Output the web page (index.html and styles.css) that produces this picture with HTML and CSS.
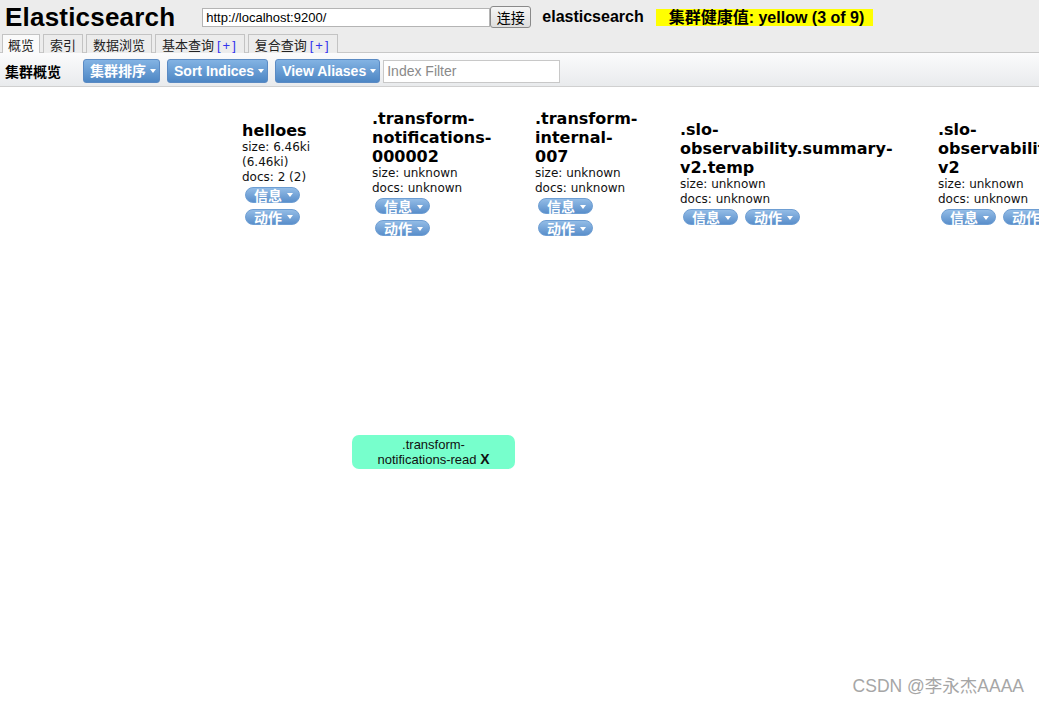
FILE: index.html
```html
<!DOCTYPE html>
<html lang="zh">
<head>
<meta charset="utf-8">
<title>Elasticsearch Head</title>
<link rel="stylesheet" href="styles.css">
</head>
<body>
<div class="header">
  <div class="top-row">
    <div class="logo">Elasticsearch</div>
    <input class="url" type="text" value="http://localhost:9200/">
    <button class="connect">连接</button>
    <span class="cluster-name">elasticsearch</span>
    <span class="health">集群健康值: yellow (3 of 9)</span>
  </div>
  <div class="tabs">
    <div class="tab active">概览</div>
    <div class="tab">索引</div>
    <div class="tab">数据浏览</div>
    <div class="tab">基本查询 <span class="plus">[+]</span></div>
    <div class="tab">复合查询 <span class="plus">[+]</span></div>
  </div>
</div>
<div class="toolbar">
  <span class="toolbar-title">集群概览</span>
  <button class="tbtn">集群排序<i class="caret"></i></button>
  <button class="tbtn">Sort Indices<i class="caret"></i></button>
  <button class="tbtn last">View Aliases<i class="caret"></i></button>
  <input class="filter" type="text" placeholder="Index Filter">
</div>
<div class="overview">
  <div class="indices">
    <div class="col col-1">
      <div class="card">
        <div class="iname">helloes</div>
        <div class="meta">size: 6.46ki (6.46ki)</div>
        <div class="meta">docs: 2 (2)</div>
        <div class="actions stack">
          <span class="pill">信息<i class="caret sm"></i></span>
          <span class="pill">动作<i class="caret sm"></i></span>
        </div>
      </div>
    </div>
    <div class="col col-2">
      <div class="card">
        <div class="iname">.transform-<wbr>notifications-<wbr>000002</div>
        <div class="meta">size: unknown</div>
        <div class="meta">docs: unknown</div>
        <div class="actions stack">
          <span class="pill">信息<i class="caret sm"></i></span>
          <span class="pill">动作<i class="caret sm"></i></span>
        </div>
      </div>
    </div>
    <div class="col col-3">
      <div class="card">
        <div class="iname">.transform-<wbr>internal-<wbr>007</div>
        <div class="meta">size: unknown</div>
        <div class="meta">docs: unknown</div>
        <div class="actions stack">
          <span class="pill">信息<i class="caret sm"></i></span>
          <span class="pill">动作<i class="caret sm"></i></span>
        </div>
      </div>
    </div>
    <div class="col col-4">
      <div class="card">
        <div class="iname">.slo-<wbr>observability.summary-<wbr>v2.temp</div>
        <div class="meta">size: unknown</div>
        <div class="meta">docs: unknown</div>
        <div class="actions inline">
          <span class="pill">信息<i class="caret sm"></i></span>
          <span class="pill">动作<i class="caret sm"></i></span>
        </div>
      </div>
    </div>
    <div class="col col-5">
      <div class="card">
        <div class="iname">.slo-<wbr>observability.summary-<wbr>v2</div>
        <div class="meta">size: unknown</div>
        <div class="meta">docs: unknown</div>
        <div class="actions inline">
          <span class="pill">信息<i class="caret sm"></i></span>
          <span class="pill">动作<i class="caret sm"></i></span>
        </div>
      </div>
    </div>
  </div>
  <div class="alias">.transform-<br>notifications-read <b>X</b></div>
</div>
<div class="watermark">CSDN @李永杰AAAA</div>
</body>
</html>
```
FILE: styles.css
```css
html, body {
  margin: 0;
  padding: 0;
}
body {
  width: 1039px;
  height: 704px;
  overflow: hidden;
  position: relative;
  background: #fff;
  color: #000;
  font-family: "Liberation Sans", "Noto Sans CJK SC", sans-serif;
}

/* header */
.header {
  background: #ececec;
}
.top-row {
  display: flex;
  align-items: center;
  height: 34px;
  padding-left: 5px;
}
.logo {
  font-size: 26px;
  font-weight: bold;
  line-height: 30px;
  letter-spacing: 0.2px;
  margin-right: 27px;
}
.url {
  box-sizing: border-box;
  width: 288px;
  height: 19px;
  border: 1px solid #b4b4b4;
  background: #fff;
  font-family: "Liberation Sans", sans-serif;
  font-size: 13px;
  padding: 0 3px;
  margin: 0;
}
.connect {
  box-sizing: border-box;
  width: 41px;
  height: 22px;
  margin: 0;
  padding: 0;
  border: 1px solid #8a8a8a;
  border-radius: 3px;
  background: linear-gradient(#f6f6f6, #dedede);
  font-family: "Noto Sans CJK SC", sans-serif;
  font-size: 14px;
  line-height: 20px;
  color: #000;
}
.cluster-name {
  margin-left: 11px;
  font-size: 16px;
  font-weight: bold;
}
.health {
  margin-left: 12px;
  background: #ffff00;
  font-size: 16px;
  font-weight: bold;
  line-height: 17px;
  height: 17px;
  padding: 0 9px 0 13px;
}

/* tabs */
.tabs {
  display: flex;
  gap: 3px;
  padding-left: 2px;
  height: 19px;
  position: relative;
  z-index: 1;
  margin-bottom: -1px;
}
.tab {
  border: 1px solid #c3c3c3;
  border-bottom: none;
  padding: 0 6px;
  font-family: "Noto Sans CJK SC", sans-serif;
  font-size: 13px;
  line-height: 19px;
  color: #222;
  background: #ececec;
}
.tab.active {
  background: #fafafa;
  padding: 0 5px;
}
.plus {
  color: #3333ee;
  font-family: "Liberation Sans", sans-serif;
  letter-spacing: 2px;
}

/* toolbar */
.toolbar {
  display: flex;
  align-items: center;
  box-sizing: border-box;
  height: 35px;
  padding: 3px 0 0 5px;
  border-top: 1px solid #c8c8c8;
  border-bottom: 1px solid #d0d0d0;
  background: linear-gradient(#fbfbfc, #e9ebed);
}
.toolbar-title {
  font-family: "Noto Sans CJK SC", sans-serif;
  font-size: 14px;
  font-weight: bold;
  margin-right: 22px;
}
.tbtn {
  box-sizing: border-box;
  height: 24px;
  margin: 0 7px 0 0;
  padding: 0 3px 0 6px;
  border: 1px solid #5b8bc4;
  border-radius: 3px;
  background: linear-gradient(#83b3e3, #4d86c4);
  color: #fff;
  font-family: "Liberation Sans", "Noto Sans CJK SC", sans-serif;
  font-size: 14px;
  font-weight: bold;
  line-height: 22px;
  display: flex;
  align-items: center;
}
.tbtn.last {
  margin-right: 3px;
}
.caret {
  display: inline-block;
  width: 0;
  height: 0;
  margin-left: 4px;
  border-left: 3.5px solid transparent;
  border-right: 3.5px solid transparent;
  border-top: 4px solid #fff;
}
.filter {
  box-sizing: border-box;
  width: 177px;
  height: 23px;
  margin: 0;
  border: 1px solid #c8c8c8;
  background: #fff;
  padding: 0 3px;
  font-family: "Liberation Sans", sans-serif;
  font-size: 14px;
}
.filter::placeholder {
  color: #8a8a8a;
}

/* overview */
.overview {
  overflow: hidden;
}
.indices {
  display: flex;
  align-items: center;
  margin-top: 22px;
  margin-left: 242px;
  width: 1100px;
}
.col {
  flex: none;
}
.col-1 { width: 130px; }
.col-2 { width: 163px; }
.col-3 { width: 145px; }
.col-4 { width: 258px; }
.col-5 { width: 258px; }
.col-1 .card { width: 90px; }
.col-2 .card { width: 125px; }
.col-3 .card { width: 110px; }
.col-4 .card, .col-5 .card { width: 232px; }

.card {
  font-family: "DejaVu Sans", Verdana, sans-serif;
}
.iname {
  font-size: 16px;
  font-weight: bold;
  line-height: 19px;
}
.meta {
  font-size: 12px;
  line-height: 15px;
  color: #111;
}
.actions {
  margin-top: 2px;
  display: flex;
}
.actions.stack {
  flex-direction: column;
  align-items: flex-start;
  gap: 6px;
}
.actions.inline {
  gap: 7px;
}
.pill {
  box-sizing: border-box;
  display: inline-flex;
  align-items: center;
  height: 16px;
  margin-left: 3px;
  padding: 0 6px 0 8px;
  border: 1px solid #6e9ed3;
  border-radius: 8px;
  background: linear-gradient(#93bce6, #5a8fcb);
  color: #fff;
  font-family: "Noto Sans CJK SC", sans-serif;
  font-size: 14px;
  font-weight: bold;
  line-height: 14px;
}
.actions.inline .pill + .pill {
  margin-left: 0;
}
.caret.sm {
  margin-left: 5px;
  margin-top: 1px;
}

.alias {
  box-sizing: border-box;
  width: 163px;
  height: 34px;
  margin: 199px 0 0 352px;
  padding: 2px 0;
  border-radius: 7px;
  background: #77ffcc;
  text-align: center;
  font-family: "Liberation Sans", sans-serif;
  font-size: 13px;
  line-height: 15px;
  color: #111;
}
.alias b {
  font-size: 14px;
}

.watermark {
  position: absolute;
  right: 15px;
  top: 675px;
  font-family: "Liberation Sans", "Noto Sans CJK SC", sans-serif;
  font-size: 17.5px;
  line-height: 22px;
  color: #a6a6a6;
}
```
